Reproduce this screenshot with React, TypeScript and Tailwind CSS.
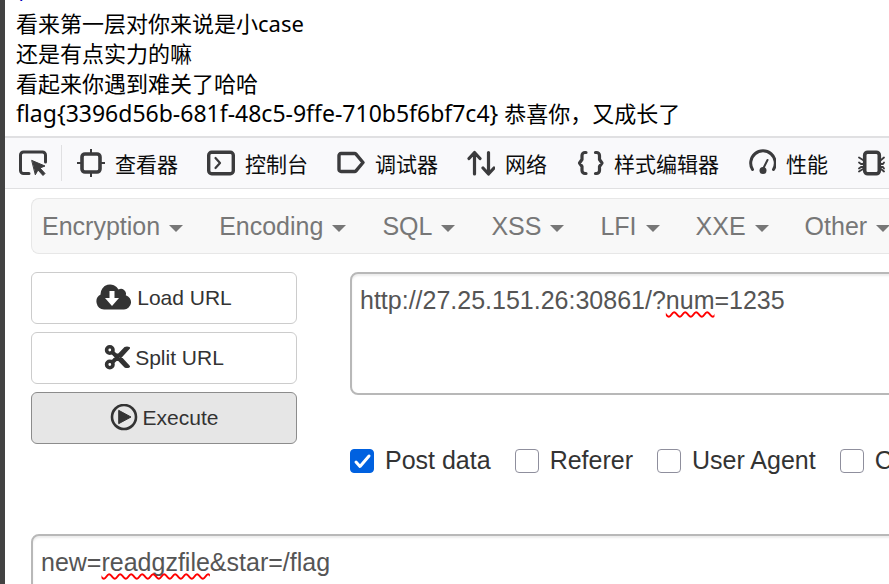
import React, { useState } from 'react';

interface ToolTab {
  id: string;
  label: string;
  icon: React.ReactNode;
}

const stroke = {
  fill: 'none',
  stroke: 'currentColor',
  strokeLinecap: 'round' as const,
  strokeLinejoin: 'round' as const,
};

const toolTabs: ToolTab[] = [
  {
    id: 'inspector',
    label: '查看器',
    icon: (
      <svg className="w-7 h-7" viewBox="0 0 28 28" {...stroke}>
        <rect x="5" y="5" width="18" height="18" rx="3" strokeWidth={3.6} />
        <path strokeWidth={2} strokeLinecap="butt" d="M14 0v5M14 23v5M0 14h5M23 14h5" />
      </svg>
    ),
  },
  {
    id: 'console',
    label: '控制台',
    icon: (
      <svg className="w-7 h-7" viewBox="0 0 28 28" {...stroke}>
        <rect x="1.700" y="3.200" width="24.600" height="21.600" rx="3" strokeWidth={3.4} />
        <path strokeWidth={2.2} d="M8.500 9l4.500 5-4.500 5" />
      </svg>
    ),
  },
  {
    id: 'debugger',
    label: '调试器',
    icon: (
      <svg className="w-7 h-7" viewBox="0 0 28 28" {...stroke}>
        <path strokeWidth={3.4} d="M4 4.500h13.500a2 2 0 011.500.7l7 8.300-7 8.300a2 2 0 01-1.500.7H4a2 2 0 01-2-2v-14a2 2 0 012-2z" />
      </svg>
    ),
  },
  {
    id: 'network',
    label: '网络',
    icon: (
      <svg className="w-7 h-7" viewBox="0 0 28 28" {...stroke}>
        <path strokeWidth={3.2} d="M7.500 25V4M2 9.500l5.500-6 5.500 6M21.500 3.500v21M16 19l5.500 6 5.500-6" />
      </svg>
    ),
  },
  {
    id: 'style',
    label: '样式编辑器',
    icon: (
      <svg className="w-7 h-7" viewBox="0 0 28 28" {...stroke}>
        <path strokeWidth={3.2} d="M10 3.500H9a3 3 0 00-3 3v4L3.500 14 6 17.500v4a3 3 0 003 3h1M19.500 3.500h1a3 3 0 013 3v4L26 14l-2.500 3.500v4a3 3 0 01-3 3h-1" />
      </svg>
    ),
  },
  {
    id: 'performance',
    label: '性能',
    icon: (
      <svg className="w-7 h-7" viewBox="0 0 28 28" {...stroke}>
        <path strokeWidth={3} d="M4.500 20.500A12.300 12.300 0 1125.500 20.500" />
        <path strokeWidth={2} d="M15 20l4.500-9" />
        <circle cx="15" cy="21.500" r="3.500" fill="currentColor" stroke="none" />
      </svg>
    ),
  },
  {
    id: 'memory',
    label: '内存',
    icon: (
      <svg className="w-7 h-7" viewBox="0 0 28 28" {...stroke}>
        <rect x="7.700" y="3.200" width="14.600" height="21.600" rx="3" strokeWidth={3.6} />
        <path strokeWidth={1.8} d="M6 11L2 8.500M6 15H4l-2-1.500M6 18H4l-2 1.500M6 20l-4 2.500M24 11l3-2.500M24 15h2l1-1.500M24 18h2l1 1.500M24 20l3 2.500" />
      </svg>
    ),
  },
];

const menus = ['Encryption', 'Encoding', 'SQL', 'XSS', 'LFI', 'XXE', 'Other'];

const actions = [
  {
    label: 'Load URL',
    active: false,
    icon: (
      <svg className="w-9 h-7" viewBox="0 0 36 28" fill="currentColor">
        <path
          fillRule="evenodd"
          d="M8 25.500A8 8 0 014.600 10.500A9.500 9.500 0 0122.500 5.500a5 5 0 017.300 5.700A7.300 7.300 0 0128 25.500zM13.500 7v7H9l7 8 7-8h-4.500V7z"
        />
      </svg>
    ),
  },
  {
    label: 'Split URL',
    active: false,
    icon: (
      <svg className="w-[26px] h-[26px]" viewBox="0 0 26 26" {...stroke}>
        <circle cx="5.800" cy="5" r="3.200" strokeWidth={3.6} />
        <circle cx="5.800" cy="19.500" r="3.200" strokeWidth={3.6} />
        <path strokeWidth={4} d="M8.500 7.500l5 4.500M8.500 17l5-4.500" />
        <path fill="currentColor" strokeWidth={2} d="M10 14.500L21 3q2-1 4 0L14 15zM10 10L21 21.500q2 1 4 0L14 9.500z" />
      </svg>
    ),
  },
  {
    label: 'Execute',
    active: true,
    icon: (
      <svg className="w-7 h-7" viewBox="0 0 28 28" {...stroke}>
        <circle cx="14" cy="13" r="12" strokeWidth={2.6} />
        <path fill="currentColor" strokeWidth={1} d="M9 6.500l12 6.500-12 6.500z" />
      </svg>
    ),
  },
];

interface SpellFieldProps {
  label: string;
  initial: string;
  misspelled: string;
}

// Textarea with a mirrored layer that underlines the misspelled word
const SpellField: React.FC<SpellFieldProps> = ({ label, initial, misspelled }) => {
  const [value, setValue] = useState(initial);
  const at = value.indexOf(misspelled);

  return (
    <div className="relative">
      <textarea
        aria-label={label}
        value={value}
        onChange={e => setValue(e.target.value)}
        spellCheck={false}
        className="block w-full h-[123px] resize-none rounded-lg border-2 border-[#b8b8b8] bg-white px-2 py-2 text-[25px] leading-9 text-[#555] shadow-[inset_0_2px_2px_rgba(0,0,0,0.075)] outline-none"
      />
      {at >= 0 && (
        <div
          aria-hidden="true"
          className="absolute inset-0 overflow-hidden whitespace-pre-wrap border-2 border-transparent px-2 py-2 text-[25px] leading-9 text-transparent pointer-events-none"
        >
          {value.slice(0, at)}
          <span className="underline decoration-wavy decoration-[#f00] decoration-2 underline-offset-2 [text-decoration-skip-ink:none]">
            {misspelled}
          </span>
        </div>
      )}
    </div>
  );
};

export default function App() {
  const [options, setOptions] = useState([
    { label: 'Post data', checked: true },
    { label: 'Referer', checked: false },
    { label: 'User Agent', checked: false },
    { label: 'Cookies', checked: false },
  ]);

  const toggle = (label: string) => {
    setOptions(options.map(o => (o.label === label ? { ...o, checked: !o.checked } : o)));
  };

  return (
    <div className="h-screen overflow-hidden border-l-5 border-[#424242] bg-white font-['Liberation_Sans',Arial,sans-serif]">
      {/* Page output */}
      <main className="h-[136px] overflow-hidden pl-[11px] text-[22px] leading-[30px] text-black whitespace-nowrap font-['Noto_Sans','Noto_Sans_CJK_SC',sans-serif]">
        {/* Tail of the highlighted source above */}
        <div className="flex h-2 items-start overflow-hidden">
          <code className="-mt-[15px] text-[18px] leading-5 text-[#0000bb] font-['DejaVu_Sans_Mono',monospace]">?&gt;</code>
        </div>
        <p>看来第一层对你来说是小case</p>
        <p>还是有点实力的嘛</p>
        <p>看起来你遇到难关了哈哈</p>
        <p className="text-[23px]">
          flag&#123;3396d56b-681f-48c5-9ffe-710b5f6bf7c4&#125; <span className="text-[22px]">恭喜你，又成长了</span>
        </p>
      </main>

      {/* Devtools tabs */}
      <div className="flex h-[53px] items-center overflow-hidden border-t-2 border-b border-t-[#e0e0e2] border-b-[#e0e0e2] bg-[#f9f9fb] text-[#3b3b3d]">
        <button aria-label="Pick element" className="flex h-9 shrink-0 items-center border-r border-[#e0e0e2] pl-[14px] pr-[14px]">
          <svg className="w-7 h-7" viewBox="0 0 28 28" {...stroke}>
            <path strokeWidth={3} d="M10 24.500H4.500a3 3 0 01-3-3V6a3 3 0 013-3h19a3 3 0 013 3v7" />
            <path fill="currentColor" strokeWidth={1} d="M13 11.500l13 5.500-5 2 5 5.500-2 2-5-5.500-2.500 4.500z" />
          </svg>
        </button>
        {toolTabs.map(tab => (
          <button key={tab.id} className="flex shrink-0 items-center gap-[10px] pl-[15px] pr-[14px]">
            {tab.icon}
            <span className="text-[21px] leading-8 text-[#0c0c0d] font-['Noto_Sans_CJK_SC',sans-serif]">{tab.label}</span>
          </button>
        ))}
      </div>

      <div className="pl-[26px] pt-[9px]">
        {/* Payload menus */}
        <nav className="flex h-14 items-center overflow-hidden rounded-l-lg border border-r-0 border-[#e7e7e7] bg-[#f8f8f8] pl-[10px]">
          {menus.map(menu => (
            <button key={menu} className="mr-9 flex shrink-0 items-center gap-[9px] text-[25px] leading-9 text-[#777]">
              {menu}
              <span className="mt-1 border-x-7 border-t-7 border-x-transparent border-t-[#777]" />
            </button>
          ))}
        </nav>

        {/* Both fields run on past the right edge of the pane */}
        <div className="-mr-3">
          <div className="mt-[18px] flex">
            <div className="flex w-[266px] shrink-0 flex-col gap-2">
              {actions.map(({ label, icon, active }) => (
                <button
                  key={label}
                  className={`flex h-13 w-full items-center justify-center gap-[5px] rounded-md border text-[21px] text-[#333] ${
                    active ? 'border-[#8c8c8c] bg-[#e6e6e6]' : 'border-[#ccc] bg-white'
                  }`}
                >
                  {icon}
                  {label}
                </button>
              ))}
            </div>

            <div className="ml-[53px] min-w-0 flex-1 overflow-hidden">
              <SpellField label="URL" initial="http://27.25.151.26:30861/?num=1235" misspelled="num" />
              <div className="mt-[47px] flex gap-6 overflow-hidden">
                {options.map(o => (
                  <label key={o.label} className="flex shrink-0 items-start gap-[11px] text-[25px] leading-9 text-[#333]">
                    <span className="relative mt-[7px] flex">
                      <input
                        type="checkbox"
                        checked={o.checked}
                        onChange={() => toggle(o.label)}
                        className="size-6 appearance-none rounded-sm border border-[#8f8f9d] bg-white checked:border-[#0061e0] checked:bg-[#0061e0]"
                      />
                      {o.checked && (
                        <svg className="absolute inset-0 size-6 text-white pointer-events-none" viewBox="0 0 24 24" {...stroke}>
                          <path strokeWidth={3} d="M6 13l4 4.500L19 7" />
                        </svg>
                      )}
                    </span>
                    {o.label}
                  </label>
                ))}
              </div>
            </div>
          </div>

          <div className="mt-14">
            <SpellField label="Post data body" initial="new=readgzfile&star=/flag" misspelled="readgzfile" />
          </div>
        </div>
      </div>
    </div>
  );
}
